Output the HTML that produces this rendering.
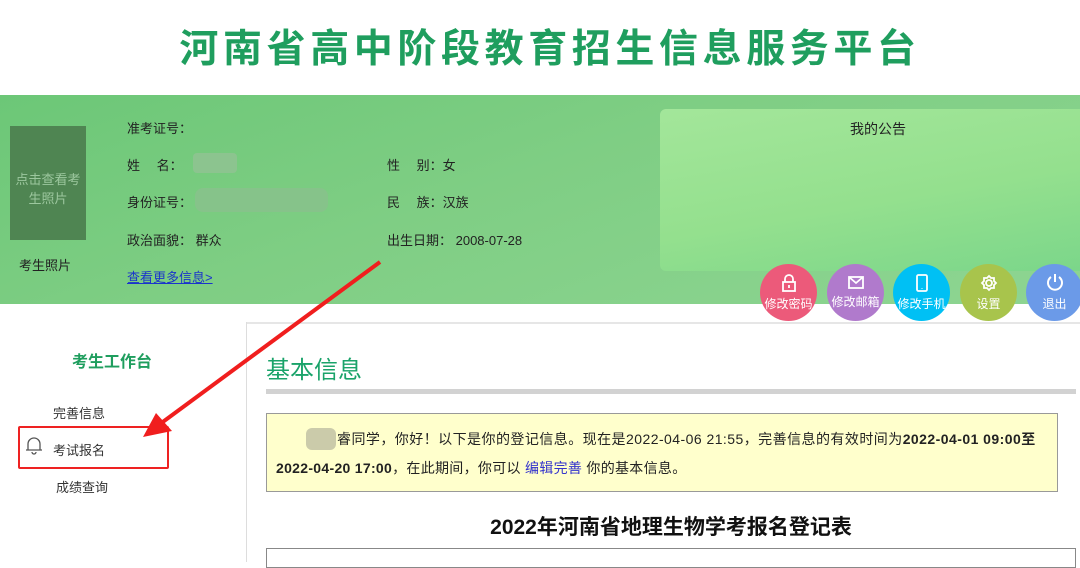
<!DOCTYPE html>
<html><head><meta charset="utf-8"><style>
*{margin:0;padding:0;box-sizing:border-box}
body{width:1080px;height:562px;overflow:hidden;background:#fff;font-family:"Liberation Sans","Noto Sans CJK SC",sans-serif;position:relative;color:#222}
.a{position:absolute;white-space:nowrap}
.c{position:absolute;width:57px;height:57px;border-radius:50%;color:#fff;font-size:12px;text-align:center}
.c svg{display:block;margin:10px auto 3px}
</style></head><body>
<div class="a" style="left:0;top:18px;width:1100px;text-align:center;font-size:39px;font-weight:bold;color:#1f9e5e;letter-spacing:4.6px">河南省高中阶段教育招生信息服务平台</div>
<div class="a" style="left:0;top:95px;width:1080px;height:209px;background:linear-gradient(160deg,#6cc777 0%,#7fce84 45%,#8ed592 100%)"></div>
<div class="a" style="left:10px;top:126px;width:76px;height:114px;background:#4f8552;color:#9cc79e;font-size:13px;text-align:center;white-space:normal;padding-top:44px;line-height:19px">点击查看考生照片</div>
<div class="a" style="left:19px;top:255px;font-size:13px">考生照片</div>
<div class="a" style="left:127px;top:118px;font-size:13px">准考证号：</div>
<div class="a" style="left:127px;top:155px;font-size:13px">姓　 名：</div>
<div class="a" style="left:193px;top:153px;width:44px;height:20px;background:#8cc48f;border-radius:4px"></div>
<div class="a" style="left:127px;top:192px;font-size:13px">身份证号：</div>
<div class="a" style="left:195px;top:188px;width:133px;height:24px;background:#86c38a;border-radius:8px"></div>
<div class="a" style="left:127px;top:230px;font-size:13px">政治面貌： 群众</div>
<div class="a" style="left:127px;top:267px;font-size:13px;color:#1a33cc;text-decoration:underline">查看更多信息&gt;</div>
<div class="a" style="left:387px;top:155px;font-size:13px">性　 别：女</div>
<div class="a" style="left:387px;top:192px;font-size:13px">民　 族：汉族</div>
<div class="a" style="left:387px;top:230px;font-size:13px">出生日期： 2008-07-28</div>
<div class="a" style="left:660px;top:109px;width:430px;height:162px;border-radius:6px;background:linear-gradient(170deg,#a3e69a 0%,#94e08e 55%,#7bd68a 100%)"></div>
<div class="a" style="left:660px;top:119px;width:436px;text-align:center;font-size:14px">我的公告</div>
<div class="c" style="left:760px;top:264px;background:#ec5a7a"><svg width="16" height="18" viewBox="0 0 16 18" fill="none" stroke="#fff" stroke-width="1.8"><path d="M4 8V5a4 4 0 0 1 8 0v3"/><rect x="2" y="8" width="12" height="9"/><path d="M8 11v3"/></svg>修改密码</div>
<div class="c" style="left:827px;top:264px;background:#b07acc"><svg width="18" height="16" viewBox="0 0 18 16" fill="none" stroke="#fff" stroke-width="1.8"><rect x="2" y="3" width="14" height="11"/><path d="M2 3l7 6 7-6"/></svg>修改邮箱</div>
<div class="c" style="left:893px;top:264px;background:#00c0f4"><svg width="14" height="18" viewBox="0 0 14 18" fill="none" stroke="#fff" stroke-width="1.8"><rect x="2" y="1" width="10" height="16" rx="1.5"/><path d="M7 14v.5"/></svg>修改手机</div>
<div class="c" style="left:960px;top:264px;background:#a8c44c"><svg width="18" height="18" viewBox="0 0 18 18" fill="none" stroke="#fff" stroke-width="1.8"><circle cx="9" cy="9" r="3"/><path d="M9 2l2 2 3 0 0 3 2 2-2 2 0 3-3 0-2 2-2-2-3 0 0-3-2-2 2-2 0-3 3 0z"/></svg>设置</div>
<div class="c" style="left:1026px;top:264px;background:#6b9ae8"><svg width="20" height="20" viewBox="0 0 20 20" fill="none" stroke="#fff" stroke-width="2" style="margin-top:8px"><path d="M6 5a7 7 0 1 0 8 0"/><path d="M10 2v8"/></svg>退出</div>
<div class="a" style="left:246px;top:322px;width:834px;height:2px;background:#e6e6e6"></div>
<div class="a" style="left:246px;top:322px;width:1px;height:240px;background:#ddd"></div>
<div class="a" style="left:72px;top:348px;font-size:16px;font-weight:bold;color:#1f9e5e">考生工作台</div>
<div class="a" style="left:53px;top:403px;font-size:13px;color:#333">完善信息</div>
<div class="a" style="left:18px;top:426px;width:151px;height:43px;border:2px solid #ee2222;border-radius:2px"></div>
<svg class="a" style="left:25px;top:435px" width="18" height="20" viewBox="0 0 18 20" fill="none" stroke="#555" stroke-width="1.3"><path d="M3 15V9a6 6 0 0 1 12 0v6h2H1z"/><path d="M7 17a2 2 0 0 0 4 0"/></svg>
<div class="a" style="left:53px;top:440px;font-size:13px;color:#333">考试报名</div>
<div class="a" style="left:56px;top:477px;font-size:13px;color:#333">成绩查询</div>
<div class="a" style="left:266px;top:350px;font-size:24px;color:#1aa36a">基本信息</div>
<div class="a" style="left:266px;top:389px;width:810px;height:5px;background:#d2d2d2"></div>
<div class="a" style="left:266px;top:413px;width:792px;height:79px;background:#ffffcc;border:1px solid #999"></div>
<div class="a" style="left:306px;top:428px;width:30px;height:22px;background:#cbcbaa;border-radius:6px"></div>
<div class="a" style="left:337px;top:429px;font-size:14px;letter-spacing:0.45px">睿同学，你好！以下是你的登记信息。现在是2022-04-06 21:55，完善信息的有效时间为<b>2022-04-01 09:00至</b></div>
<div class="a" style="left:276px;top:458px;font-size:14px;letter-spacing:0.3px"><b>2022-04-20 17:00</b>，在此期间，你可以 <span style="color:#3333cc">编辑完善</span> 你的基本信息。</div>
<div class="a" style="left:266px;top:511px;width:810px;text-align:center;font-size:21px;font-weight:bold;color:#111">2022年河南省地理生物学考报名登记表</div>
<div class="a" style="left:266px;top:548px;width:810px;height:20px;border:1px solid #888"></div>
<svg class="a" style="left:0;top:0" width="1080" height="562"><path d="M380 262L160 424" stroke="#f01e1e" stroke-width="4"/><path d="M143 437L156 413L172 431z" fill="#f01e1e"/></svg>
</body></html>
